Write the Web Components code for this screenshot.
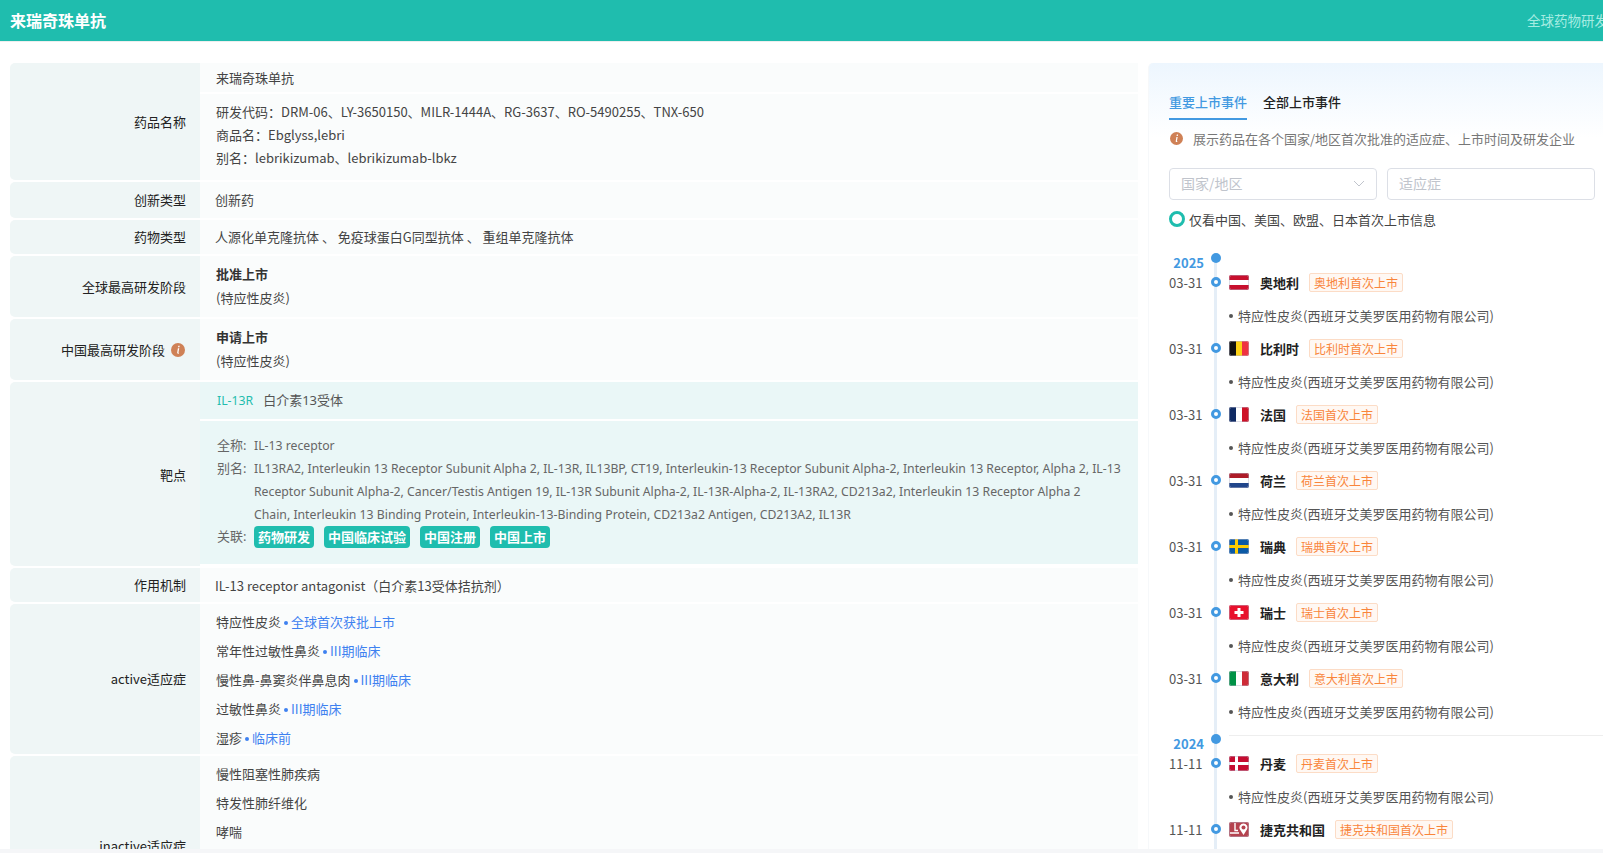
<!DOCTYPE html>
<html lang="zh">
<head>
<meta charset="utf-8">
<title>来瑞奇珠单抗</title>
<style>
  html, body { margin: 0; height: 100%; overflow: hidden; background: #f5f6f8; }
  body { font: 13px "Noto Sans CJK SC", "Noto Sans", sans-serif; color: #444; }
</style>
</head>
<body>
<drug-page>
  <drug-header slot="header" title-text="来瑞奇珠单抗" nav-text="全球药物研发状态"></drug-header>

  <div slot="left">
    <info-row label="药品名称" flush>
      <sub-cell>来瑞奇珠单抗</sub-cell>
      <sub-cell lines>
        <div>研发代码：DRM-06、LY-3650150、MILR-1444A、RG-3637、RO-5490255、TNX-650</div>
        <div>商品名：Ebglyss,lebri</div>
        <div>别名：lebrikizumab、lebrikizumab-lbkz</div>
      </sub-cell>
    </info-row>
    <info-row label="创新类型" style="--pad-bottom:6.75px">创新药</info-row>
    <info-row label="药物类型">人源化单克隆抗体 、 免疫球蛋白G同型抗体 、 重组单克隆抗体</info-row>
    <info-row label="全球最高研发阶段" stage>
      <stage-text name="批准上市" note="(特应性皮炎)"></stage-text>
    </info-row>
    <info-row label="中国最高研发阶段" stage info>
      <stage-text name="申请上市" note="(特应性皮炎)"></stage-text>
    </info-row>
    <info-row label="靶点" flush tinted>
      <target-card code="IL-13R" name="白介素13受体" full="IL-13 receptor"
        alias="IL13RA2, Interleukin 13 Receptor Subunit Alpha 2, IL-13R, IL13BP, CT19, Interleukin-13 Receptor Subunit Alpha-2, Interleukin 13 Receptor, Alpha 2, IL-13
Receptor Subunit Alpha-2, Cancer/Testis Antigen 19, IL-13R Subunit Alpha-2, IL-13R-Alpha-2, IL-13RA2, CD213a2, Interleukin 13 Receptor Alpha 2
Chain, Interleukin 13 Binding Protein, Interleukin-13-Binding Protein, CD213a2 Antigen, CD213A2, IL13R">
        <teal-tag>药物研发</teal-tag>
        <teal-tag>中国临床试验</teal-tag>
        <teal-tag>中国注册</teal-tag>
        <teal-tag>中国上市</teal-tag>
      </target-card>
    </info-row>
    <info-row label="作用机制" style="--pad-bottom:4.75px">IL-13 receptor antagonist（白介素13受体拮抗剂）</info-row>
    <info-row label="active适应症" list>
      <indication-item phase="全球首次获批上市">特应性皮炎</indication-item>
      <indication-item phase="III期临床">常年性过敏性鼻炎</indication-item>
      <indication-item phase="III期临床">慢性鼻-鼻窦炎伴鼻息肉</indication-item>
      <indication-item phase="III期临床">过敏性鼻炎</indication-item>
      <indication-item phase="临床前">湿疹</indication-item>
    </info-row>
    <info-row label="inactive适应症" list style="min-height:180px">
      <indication-item>慢性阻塞性肺疾病</indication-item>
      <indication-item>特发性肺纤维化</indication-item>
      <indication-item>哮喘</indication-item>
    </info-row>
  </div>

  <launch-panel slot="right">
    <launch-year year="2025" first></launch-year>
    <launch-event date="03-31" country="奥地利" flag="at"></launch-event>
    <launch-event date="03-31" country="比利时" flag="be"></launch-event>
    <launch-event date="03-31" country="法国" flag="fr"></launch-event>
    <launch-event date="03-31" country="荷兰" flag="nl"></launch-event>
    <launch-event date="03-31" country="瑞典" flag="se"></launch-event>
    <launch-event date="03-31" country="瑞士" flag="ch"></launch-event>
    <launch-event date="03-31" country="意大利" flag="it"></launch-event>
    <launch-year year="2024"></launch-year>
    <launch-event date="11-11" country="丹麦" flag="dk"></launch-event>
    <launch-event date="11-11" country="捷克共和国" flag="cz"></launch-event>
  </launch-panel>
</drug-page>

<script>
const infoIcon = (size) => `<svg viewBox="0 0 12 12" width="${size}" height="${size}" style="display:block;flex:none"><circle cx="6" cy="6" r="6" fill="#cf8156"/><path d="M6.3 2.4h1.2l-.3 1.2H6zM5.9 4.6h1.2L6.4 8.2c0 .3.1.4.5.2l-.1.6c-.9.4-1.7.2-1.5-.8z" fill="#fff"/></svg>`;

const FLAGS = {
  at: `<rect width="20" height="15" fill="#fff"/><rect width="20" height="5" fill="#c8102e"/><rect y="10" width="20" height="5" fill="#c8102e"/>`,
  be: `<rect width="7" height="15" fill="#111"/><rect x="7" width="6" height="15" fill="#fcd116"/><rect x="13" width="7" height="15" fill="#ef3340"/>`,
  fr: `<rect width="7" height="15" fill="#0f2a63"/><rect x="7" width="6" height="15" fill="#fff"/><rect x="13" width="7" height="15" fill="#ce1126"/>`,
  nl: `<rect width="20" height="5" fill="#ae1c28"/><rect y="5" width="20" height="5" fill="#fff"/><rect y="10" width="20" height="5" fill="#21468b"/>`,
  se: `<rect width="20" height="15" fill="#0b5aa5"/><rect x="6" width="3" height="15" fill="#fecc00"/><rect y="6" width="20" height="3" fill="#fecc00"/>`,
  ch: `<rect width="20" height="15" fill="#e8112d"/><rect x="8.5" y="3" width="3" height="9" fill="#fff"/><rect x="5.5" y="6" width="9" height="3" fill="#fff"/>`,
  it: `<rect width="7" height="15" fill="#009246"/><rect x="7" width="6" height="15" fill="#fff"/><rect x="13" width="7" height="15" fill="#ce2b37"/>`,
  dk: `<rect width="20" height="15" fill="#c60c30"/><rect x="6" width="3" height="15" fill="#fff"/><rect y="6" width="20" height="3" fill="#fff"/>`,
  cz: `<rect width="20" height="15" fill="#b5434f"/><path d="M6 1v7.5h3M1 11h9" fill="none" stroke="#fff" stroke-width="1.4"/><path d="M14.5 1.5a4 4 0 0 1 3.4 6L14.5 13 11 7.5a4 4 0 0 1 3.5-6z" fill="#fff"/><circle cx="14.5" cy="5.5" r="2" fill="#b5434f"/>`
};

class DrugPage extends HTMLElement {
  constructor() {
    super();
    this.attachShadow({ mode: "open" }).innerHTML = `
      <style>
        :host { display: flex; flex-direction: column; height: 849px; background: #fff; overflow: hidden; }
        .body { flex: 1; min-height: 0; display: flex; gap: 10px; padding: 21px 0 0 10px; overflow: hidden; }
        .left { width: 1128px; flex: none; }
        .right { flex: 1; min-width: 0; }
      </style>
      <slot name="header"></slot>
      <div class="body">
        <div class="left"><slot name="left"></slot></div>
        <div class="right"><slot name="right"></slot></div>
      </div>`;
  }
}

class DrugHeader extends HTMLElement {
  constructor() {
    super();
    this.attachShadow({ mode: "open" });
  }
  connectedCallback() {
    this.shadowRoot.innerHTML = `
      <style>
        :host { display: flex; flex: none; align-items: center; justify-content: space-between; height: 39px; padding-bottom: 2px; background: #1fbdae; border-bottom: 1px solid #eee; overflow: hidden; }
        b { margin-left: 10px; color: #fff; font-size: 16px; }
        span { flex: none; width: 76px; overflow: hidden; white-space: nowrap; color: #a5ece2; font-size: 13.5px; }
      </style>
      <b>${this.getAttribute("title-text")}</b>
      <span>${this.getAttribute("nav-text")}</span>`;
  }
}

class InfoRow extends HTMLElement {
  constructor() {
    super();
    this.attachShadow({ mode: "open" });
  }
  connectedCallback() {
    const info = this.hasAttribute("info") ? infoIcon(14) : "";
    this.shadowRoot.innerHTML = `
      <style>
        :host { display: grid; grid-template-columns: 190px 1fr; margin-bottom: 2px; line-height: 23px; }
        :host([info]) .label { padding-right: 15px; }
        .label { display: flex; align-items: center; justify-content: flex-end; gap: 6px; padding-right: 14px; background: #eff6f6; border-radius: 5px 0 0 5px; color: #222; }
        .value { background: #fafcfc; padding: 5.75px 15px var(--pad-bottom, 5.75px); min-width: 0; display: flex; flex-direction: column; justify-content: center; }
        :host([flush]) .value { padding: 0; background: none; justify-content: flex-start; }
        :host([stage]) .value { padding: 5.5px 15px 7.5px 16px; line-height: 24px; }
        :host([list]) .value { padding: 3px 16px 2px; justify-content: flex-start; }
      </style>
      <div class="label"><span>${this.getAttribute("label")}</span>${info}</div>
      <div class="value"><slot></slot></div>`;
  }
}

class SubCell extends HTMLElement {
  constructor() {
    super();
    this.attachShadow({ mode: "open" }).innerHTML = `
      <style>
        :host { display: block; background: #fafcfc; padding: 3px 16px; margin-bottom: 2px; }
        :host([lines]) { margin-bottom: 0; padding: 6px 16px 11px; }
      </style>
      <slot></slot>`;
  }
}

class StageText extends HTMLElement {
  constructor() {
    super();
    this.attachShadow({ mode: "open" });
  }
  connectedCallback() {
    this.shadowRoot.innerHTML = `
      <style>
        :host { display: block; }
        b { display: block; color: #333; }
        span { display: block; }
      </style>
      <b>${this.getAttribute("name")}</b>
      <span>${this.getAttribute("note")}</span>`;
  }
}

class TargetCard extends HTMLElement {
  constructor() {
    super();
    this.attachShadow({ mode: "open" });
  }
  connectedCallback() {
    this.shadowRoot.innerHTML = `
      <style>
        :host { display: block; color: #666; font-family: "Noto Sans", "Noto Sans CJK SC", sans-serif; }
        .top { background: #eaf7f7; height: 37px; padding: 0 17px; display: flex; align-items: center; gap: 10px; margin-bottom: 2px; }
        .code { color: #1fbdae; font-size: 12.25px; }
        .name { color: #555; }
        .detail { background: #eaf7f7; height: 143px; box-sizing: border-box; padding: 13px 0 0 17px; margin-bottom: 2px; display: grid; grid-template-columns: 37px 1fr; align-content: start; }
        .latin { font-size: 12.25px; white-space: pre; }
        .rel { margin-top: -1px; }
        .tags { display: flex; gap: 10px; align-items: center; height: 23px; }
      </style>
      <div class="top"><span class="code">${this.getAttribute("code")}</span><span class="name">${this.getAttribute("name")}</span></div>
      <div class="detail">
        <span>全称:</span><span class="latin">${this.getAttribute("full")}</span>
        <span>别名:</span><span class="latin">${this.getAttribute("alias")}</span>
        <span class="rel">关联:</span><div class="tags rel"><slot></slot></div>
      </div>`;
  }
}

class TealTag extends HTMLElement {
  constructor() {
    super();
    this.attachShadow({ mode: "open" }).innerHTML = `
      <style>
        :host { display: block; height: 22px; line-height: 22px; padding: 0 4px; background: #1fbdae; color: #fff; border-radius: 4px; font-weight: 700; font-family: "Noto Sans CJK SC", sans-serif; }
      </style>
      <slot></slot>`;
  }
}

class IndicationItem extends HTMLElement {
  constructor() {
    super();
    this.attachShadow({ mode: "open" });
  }
  connectedCallback() {
    const phase = this.getAttribute("phase");
    this.shadowRoot.innerHTML = `
      <style>
        :host { display: block; height: 29px; line-height: 29px; }
        em { font-style: normal; color: #3e81f0; }
        i { display: inline-block; width: 4px; height: 4px; margin: 0 3px 0 3px; border-radius: 50%; background: #3e81f0; vertical-align: 2px; }
      </style>
      <slot></slot>${phase ? `<i></i><em>${phase}</em>` : ""}`;
  }
}

class LaunchPanel extends HTMLElement {
  constructor() {
    super();
    this.attachShadow({ mode: "open" }).innerHTML = `
      <style>
        :host { display: block; height: 100%; padding: 0 0 0 20px; background: linear-gradient(#edf6fe, #fff 75px); border-left: 1px solid #f6f8fa; border-radius: 5px 0 0 0; overflow: hidden; }
        .tabs { display: flex; gap: 16px; padding-top: 27px; font-weight: 500; }
        .tab { height: 28px; line-height: 23px; color: #222; }
        .tab.on { color: #4299e1; border-bottom: 2px solid #4299e1; }
        .tip { display: flex; align-items: center; gap: 10px; margin: 4px 0 0 1px; height: 28px; color: #777; white-space: nowrap; }
        .filters { display: flex; gap: 10px; margin-top: 16px; }
        .box { width: 208px; height: 32px; box-sizing: border-box; border: 1px solid #dcdfe6; border-radius: 4px; padding: 0 11px 2px; display: flex; align-items: center; justify-content: space-between; color: #c0c4cc; background: #fff; font-size: 14px; }
        .radio { display: flex; align-items: center; gap: 4px; margin-top: 9px; height: 20px; color: #444; }
        .radio i { width: 16px; height: 16px; box-sizing: border-box; border: 3.5px solid #1fbdae; border-radius: 50%; background: #fff; }
        .line { margin-top: 25px; }
      </style>
      <div class="tabs"><div class="tab on">重要上市事件</div><div class="tab">全部上市事件</div></div>
      <div class="tip">${infoIcon(13)}<span>展示药品在各个国家/地区首次批准的适应症、上市时间及研发企业</span></div>
      <div class="filters">
        <div class="box"><span>国家/地区</span><svg width="12" height="12" viewBox="0 0 12 12"><path d="M1 4l5 5 5-5" fill="none" stroke="#c0c4cc"/></svg></div>
        <div class="box"><span>适应症</span></div>
      </div>
      <div class="radio"><i></i><span>仅看中国、美国、欧盟、日本首次上市信息</span></div>
      <div class="line"><slot></slot></div>`;
  }
}

class LaunchYear extends HTMLElement {
  constructor() {
    super();
    this.attachShadow({ mode: "open" });
  }
  connectedCallback() {
    this.shadowRoot.innerHTML = `
      <style>
        :host { display: grid; grid-template-columns: 34px 10px 1fr; column-gap: 8px; height: 19px; }
        b { color: #4299e1; text-align: right; line-height: 16px; padding-top: 1px; margin-right: -1px; }
        .track { position: relative; }
        .track::before { content: ""; position: absolute; left: 3px; top: 0; bottom: 0; width: 3px; background: #e5eef7; }
        .dot { position: absolute; left: 0; top: -1px; width: 10px; height: 10px; border-radius: 50%; background: #4299e1; }
        .rule { border-top: 1px solid #eee; height: 0; }
        :host([first]) .rule { border: 0; }
      </style>
      <b>${this.getAttribute("year")}</b>
      <div class="track"><div class="dot"></div></div>
      <div class="rule"></div>`;
  }
}

class LaunchEvent extends HTMLElement {
  constructor() {
    super();
    this.attachShadow({ mode: "open" });
  }
  connectedCallback() {
    const country = this.getAttribute("country");
    this.shadowRoot.innerHTML = `
      <style>
        :host { display: grid; grid-template-columns: 34px 10px 1fr; column-gap: 8px; height: 66px; white-space: nowrap; }
        .date { color: #555; line-height: 18px; padding-top: 1px; }
        .track { position: relative; }
        .track::before { content: ""; position: absolute; left: 3px; top: 0; bottom: 0; width: 3px; background: #e5eef7; }
        .dot { position: absolute; left: 0; top: 4px; width: 10px; height: 10px; box-sizing: border-box; border: 3px solid #4299e1; border-radius: 50%; background: #fff; }
        .head { display: flex; align-items: center; height: 18px; }
        svg { display: block; width: 20px; height: 15px; flex: none; margin-right: 11px; }
        b { color: #222; margin-right: 10px; }
        .tag { flex: none; height: 19px; line-height: 18px; padding: 0 4px; box-sizing: border-box; border: 1px solid #fcdcc6; background: #fff8f3; color: #f9853b; border-radius: 2px; font-size: 12px; }
        .ind { display: flex; align-items: center; gap: 5px; margin-top: 15px; line-height: 20px; color: #555; }
        .ind::before { content: ""; width: 4px; height: 4px; border-radius: 50%; background: #555; }
      </style>
      <div class="date">${this.getAttribute("date")}</div>
      <div class="track"><div class="dot"></div></div>
      <div>
        <div class="head"><svg viewBox="0 0 20 15"><clipPath id="c"><rect width="20" height="15" rx="2"/></clipPath><g clip-path="url(#c)">${FLAGS[this.getAttribute("flag")]}</g><rect x=".5" y=".5" width="19" height="14" rx="2" fill="none" stroke="#b4b4c8" stroke-opacity=".45"/></svg><b>${country}</b><span class="tag">${country}首次上市</span></div>
        <div class="ind">特应性皮炎(西班牙艾美罗医用药物有限公司)</div>
      </div>`;
  }
}

customElements.define("drug-page", DrugPage);
customElements.define("drug-header", DrugHeader);
customElements.define("info-row", InfoRow);
customElements.define("sub-cell", SubCell);
customElements.define("stage-text", StageText);
customElements.define("target-card", TargetCard);
customElements.define("teal-tag", TealTag);
customElements.define("indication-item", IndicationItem);
customElements.define("launch-panel", LaunchPanel);
customElements.define("launch-year", LaunchYear);
customElements.define("launch-event", LaunchEvent);
</script>
</body>
</html>
